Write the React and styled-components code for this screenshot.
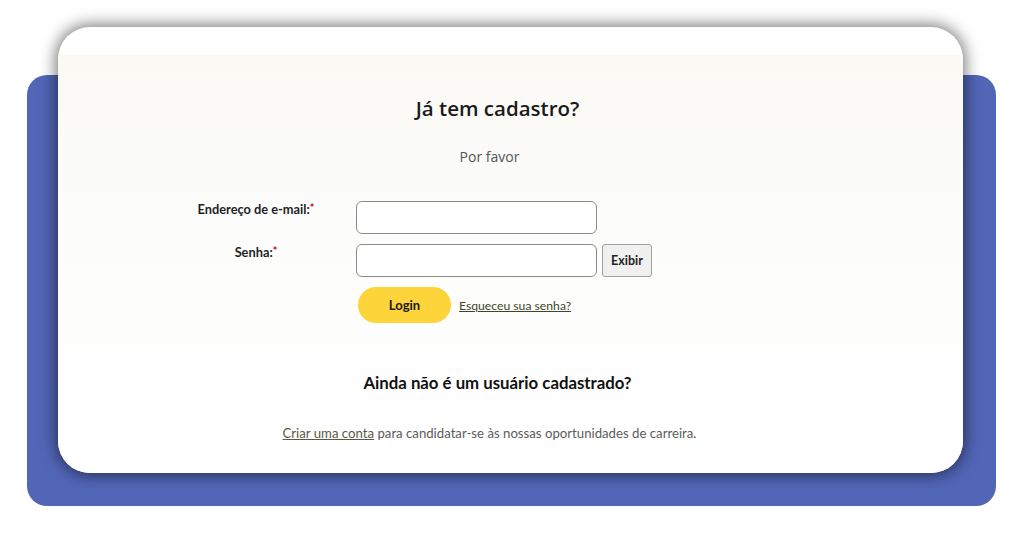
import React from "react";
import styled, { createGlobalStyle } from "styled-components";

const GlobalStyle = createGlobalStyle`
  html, body {
    margin: 0;
    padding: 0;
    background: #ffffff;
  }
  body {
    font-family: Lato, "Open Sans", sans-serif;
  }
`;

const Backdrop = styled.div`
  margin: 75px 28px 30px 27px;
  padding: 0 33px 33px 31px;
  background: #5266b8;
  border-radius: 20px;
`;

const Card = styled.div`
  position: relative;
  top: -48px;
  margin-bottom: -48px;
  height: 446px;
  box-sizing: border-box;
  padding-top: 28px;
  background: #ffffff;
  border-radius: 32px;
  box-shadow: 0 0 16px 2px rgba(0, 0, 0, 0.55);
  overflow: hidden;
`;

const Content = styled.div`
  height: 100%;
  padding-top: 41px;
  padding-right: 26px;
  box-sizing: border-box;
  background: linear-gradient(#faf9f4 0%, #fcfcfb 35%, #ffffff 100%);
  display: flex;
  flex-direction: column;
`;

const Title = styled.h2`
  margin: 0;
  text-align: center;
  font-family: "Open Sans", Lato, sans-serif;
  font-weight: 600;
  font-size: 20.5px;
  line-height: 24px;
  color: #1a1a1a;
`;

const Subtitle = styled.p`
  margin: 28px 0 0;
  padding-right: 16px;
  text-align: center;
  font-family: "Open Sans", Lato, sans-serif;
  font-size: 14px;
  line-height: 18px;
  color: #555555;
`;

const Form = styled.form`
  margin: 35px 0 0 138px;
  display: grid;
  grid-template-columns: 120px 241px 50px;
  column-gap: 40px;
  row-gap: 10px;
  align-items: start;
`;

const Label = styled.label`
  padding-top: 0;
  text-align: center;
  font-weight: 700;
  font-size: 12.8px;
  line-height: 14px;
  color: #1f1f1f;
`;

const Required = styled.span`
  color: #d0021b;
  font-size: 11px;
  vertical-align: 2px;
`;

const Field = styled.div`
  display: flex;
  gap: 5px;
  grid-column: 2 / span 2;
`;

const Input = styled.input`
  width: 241px;
  height: 33px;
  box-sizing: border-box;
  border: 1.5px solid #8a8a8a;
  border-radius: 6px;
  background: #ffffff;
  outline: none;
`;

const ShowButton = styled.button`
  width: 50px;
  height: 33px;
  box-sizing: border-box;
  border: 1.5px solid #a0a0a0;
  border-radius: 3px;
  background: #f0f0f0;
  font-family: Lato, sans-serif;
  font-weight: 700;
  font-size: 12.5px;
  color: #1f1f1f;
  padding: 0;
`;

const Actions = styled.div`
  grid-column: 2 / span 2;
  margin-top: 0;
  padding-left: 2px;
  display: flex;
  align-items: center;
  gap: 8px;
`;

const LoginButton = styled.button`
  width: 93px;
  height: 36px;
  border: none;
  border-radius: 18px;
  background: #fdd43a;
  font-family: Lato, sans-serif;
  font-weight: 700;
  font-size: 13px;
  color: #1a1a1a;
`;

const ForgotLink = styled.a`
  font-size: 12.2px;
  color: #3c4628;
  text-decoration: underline;
`;

const Question = styled.h3`
  margin: 50px 0 0;
  text-align: center;
  font-weight: 700;
  font-size: 16.8px;
  line-height: 20px;
  color: #111111;
`;

const Note = styled.p`
  margin: 31px 0 0;
  padding-right: 16px;
  text-align: center;
  font-size: 13.2px;
  line-height: 18px;
  color: #5c5c5c;
`;

const NoteLink = styled.a`
  color: #5a5a44;
  text-decoration: underline;
`;

export default function App() {
  return (
    <>
      <GlobalStyle />
      <Backdrop>
        <Card>
          <Content>
            <Title>Já tem cadastro?</Title>
            <Subtitle>Por favor</Subtitle>
            <Form onSubmit={e => e.preventDefault()}>
              <Label htmlFor="email">
                Endereço de e-mail:<Required>*</Required>
              </Label>
              <Field>
                <Input id="email" type="email" />
              </Field>
              <Label htmlFor="senha">
                Senha:<Required>*</Required>
              </Label>
              <Field>
                <Input id="senha" type="password" />
                <ShowButton type="button">Exibir</ShowButton>
              </Field>
              <Actions>
                <LoginButton type="submit">Login</LoginButton>
                <ForgotLink href="#">Esqueceu sua senha?</ForgotLink>
              </Actions>
            </Form>
            <Question>Ainda não é um usuário cadastrado?</Question>
            <Note>
              <NoteLink href="#">Criar uma conta</NoteLink> para candidatar-se às nossas oportunidades de carreira.
            </Note>
          </Content>
        </Card>
      </Backdrop>
    </>
  );
}
